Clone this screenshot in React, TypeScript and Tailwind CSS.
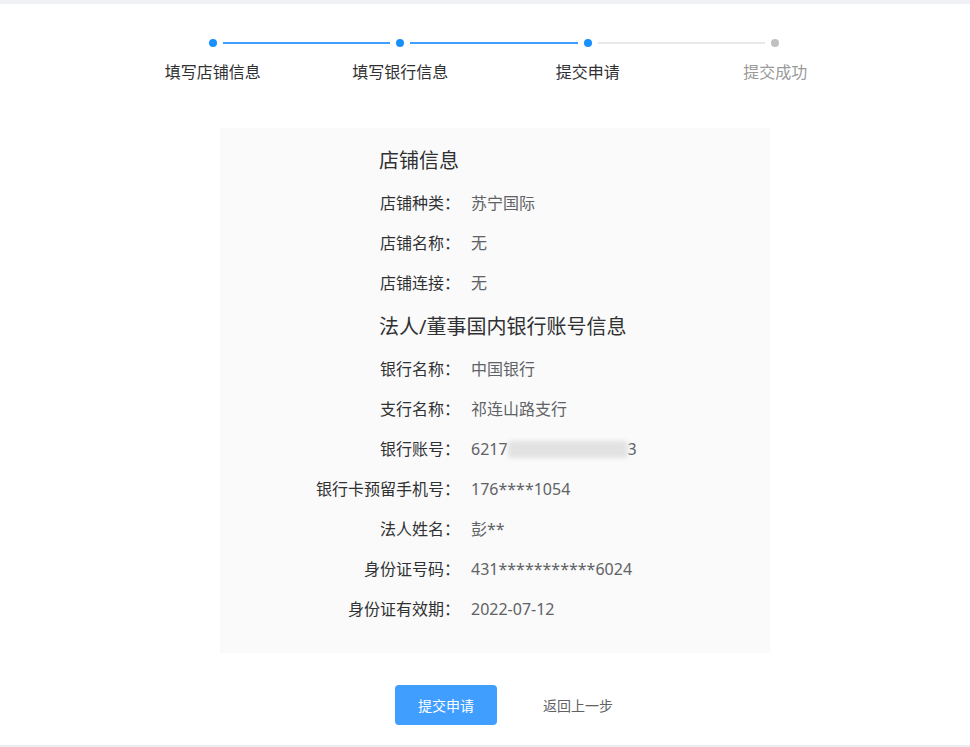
import React from 'react';

const font = { fontFamily: '"Noto Sans", "Noto Sans CJK SC", sans-serif' };

const steps = [
  { title: '填写店铺信息', done: true },
  { title: '填写银行信息', done: true },
  { title: '提交申请', done: true },
  { title: '提交成功', done: false },
];

const shopRows = [
  ['店铺种类：', '苏宁国际'],
  ['店铺名称：', '无'],
  ['店铺连接：', '无'],
];

const bankRows: [string, React.ReactNode][] = [
  ['银行名称：', '中国银行'],
  ['支行名称：', '祁连山路支行'],
  [
    '银行账号：',
    <span className="inline-flex items-center">
      6217
      <span className="inline-block w-[120px] h-[17px] bg-[#e2e2e2] blur-[2px] rounded-sm" />
      3
    </span>,
  ],
  ['银行卡预留手机号：', '176****1054'],
  ['法人姓名：', '彭**'],
  ['身份证号码：', '431***********6024'],
  ['身份证有效期：', '2022-07-12'],
];

function Row({ label, value }: { label: string; value: React.ReactNode }) {
  return (
    <div className="flex items-center h-10 text-[16px] leading-6">
      <div className="w-[240px] text-right text-[#303133]">{label}</div>
      <div className="pl-[11px] text-[#606266]">{value}</div>
    </div>
  );
}

function SectionTitle({ children }: { children: React.ReactNode }) {
  return (
    <div className="pl-[159px] pt-[10px] pb-[8px] text-[20px] leading-7 text-[#303133]">{children}</div>
  );
}

export default function App() {
  return (
    <div className="w-[970px] h-[747px] bg-white flex flex-col" style={font}>
      <div className="h-1 bg-[#f0f1f4]" />

      {/* steps */}
      <div className="pt-[35px]">
        <div className="ml-[209px] w-[570px] flex items-center">
          {steps.map((s, i) => (
            <React.Fragment key={s.title}>
              <div className={`w-2 h-2 rounded-full ${s.done ? 'bg-[#1890ff]' : 'bg-[#c0c0c0]'}`} />
              {i < steps.length - 1 && (
                <div className={`flex-1 h-[2px] mx-[6px] ${steps[i + 1].done ? 'bg-[#409eff]' : 'bg-[#e8e8e8]'}`} />
              )}
            </React.Fragment>
          ))}
        </div>
        <div className="ml-[119px] mt-[13px] flex">
          {steps.map((s) => (
            <div
              key={s.title}
              className={`w-[187.5px] text-center text-[16px] leading-6 ${s.done ? 'text-[#303133]' : 'text-[#999999]'}`}
            >
              {s.title}
            </div>
          ))}
        </div>
      </div>

      {/* info panel */}
      <div className="ml-[220px] mt-[44px] w-[550px] bg-[#fafafa] pt-[9px] pb-[24px]">
        <SectionTitle>店铺信息</SectionTitle>
        {shopRows.map(([l, v]) => (
          <Row key={l} label={l} value={v} />
        ))}
        <SectionTitle>法人/董事国内银行账号信息</SectionTitle>
        {bankRows.map(([l, v]) => (
          <Row key={l} label={l} value={v} />
        ))}
      </div>

      {/* actions */}
      <div className="ml-[395px] mt-[32px] flex items-center">
        <button className="w-[102px] h-10 rounded bg-[#409eff] text-white text-[14px]">提交申请</button>
        <button className="ml-[46px] text-[14px] text-[#606266]">返回上一步</button>
      </div>

      <div className="flex-1" />
      <div className="h-[2px] bg-[#ebedf0]" />
    </div>
  );
}
